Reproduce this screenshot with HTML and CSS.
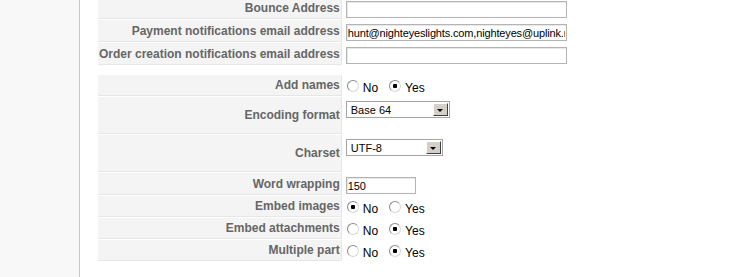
FILE: index.html
```html
<!DOCTYPE html>
<html lang="en">
<head>
    <meta charset="UTF-8">
    <title>Mail Settings</title>
    <link rel="stylesheet" href="styles.css">
</head>
<body>
    <div class="page">
        <div class="sidebar"></div>
        <div class="content">
            <table class="admintable">
                <tr>
                    <td class="key">Bounce Address</td>
                    <td class="value"><input type="text" class="text-field"></td>
                </tr>
                <tr>
                    <td class="key">Payment notifications email address</td>
                    <td class="value"><input type="text" class="text-field" value="hunt@nighteyeslights.com,nighteyes@uplink.net"></td>
                </tr>
                <tr>
                    <td class="key">Order creation notifications email address</td>
                    <td class="value"><input type="text" class="text-field"></td>
                </tr>
                <tr class="spacer">
                    <td colspan="2"></td>
                </tr>
                <tr class="radio-row">
                    <td class="key">Add names</td>
                    <td class="value">
                        <div class="choices">
                            <label class="choice"><input type="radio" name="add_names">No</label>
                            <label class="choice"><input type="radio" name="add_names" checked>Yes</label>
                        </div>
                    </td>
                </tr>
                <tr class="tall-row">
                    <td class="key">Encoding format</td>
                    <td class="value">
                        <span class="dropdown"><select class="encoding">
                            <option>Base 64</option>
                            <option>8 bit</option>
                            <option>Quoted printable</option>
                        </select></span>
                    </td>
                </tr>
                <tr class="tall-row">
                    <td class="key">Charset</td>
                    <td class="value">
                        <span class="dropdown"><select class="charset">
                            <option>UTF-8</option>
                            <option>ISO-8859-1</option>
                        </select></span>
                    </td>
                </tr>
                <tr>
                    <td class="key">Word wrapping</td>
                    <td class="value"><input type="text" class="text-field short" value="150"></td>
                </tr>
                <tr class="radio-row">
                    <td class="key">Embed images</td>
                    <td class="value">
                        <div class="choices">
                            <label class="choice"><input type="radio" name="embed_images" checked>No</label>
                            <label class="choice"><input type="radio" name="embed_images">Yes</label>
                        </div>
                    </td>
                </tr>
                <tr class="radio-row">
                    <td class="key">Embed attachments</td>
                    <td class="value">
                        <div class="choices">
                            <label class="choice"><input type="radio" name="embed_attachments">No</label>
                            <label class="choice"><input type="radio" name="embed_attachments" checked>Yes</label>
                        </div>
                    </td>
                </tr>
                <tr class="radio-row">
                    <td class="key">Multiple part</td>
                    <td class="value">
                        <div class="choices">
                            <label class="choice"><input type="radio" name="multiple_part">No</label>
                            <label class="choice"><input type="radio" name="multiple_part" checked>Yes</label>
                        </div>
                    </td>
                </tr>
            </table>
        </div>
    </div>
</body>
</html>
```

FILE: styles.css
```css
body {
    margin: 0;
    background: #fff;
    font-family: Arial, "Liberation Sans", sans-serif;
    overflow: hidden;
}
.page {
    display: flex;
    min-height: 277px;
}
.sidebar {
    width: 79px;
    background: #f8f8f8;
    border-right: 1px solid #c8c8c8;
}
.content {
    padding-left: 17px;
}
.admintable {
    border-spacing: 1px;
    margin-top: -4px;
}
.admintable td {
    padding: 0;
}
.admintable td.key {
    height: 21px;
    padding: 0 1px;
    background: #f4f4f4;
    color: #666;
    font-size: 12px;
    font-weight: bold;
    text-align: right;
    white-space: nowrap;
    border-bottom: 1px solid #e6e6e6;
    border-right: 1px solid #e6e6e6;
}
.admintable td.value {
    vertical-align: top;
    padding: 4px 0 0 3px;
    font-size: 12px;
}
.spacer td {
    height: 8px;
}
.radio-row td.key {
    height: 20px;
}
.tall-row td.key {
    height: 36px;
}
.text-field {
    box-sizing: border-box;
    width: 221px;
    height: 17px;
    margin: 0;
    padding: 0 1px;
    border: 1px solid #b4b4b4;
    box-shadow: inset 1px 1px 0 #e8e8e8;
    font-family: Arial, "Liberation Sans", sans-serif;
    font-size: 11px;
    letter-spacing: -0.15px;
    color: #000;
}
.text-field.short {
    width: 70px;
}
.choices {
    display: flex;
    align-items: center;
    padding-top: 2px;
}
.choice {
    display: flex;
    align-items: center;
    margin-right: 10px;
    color: #000;
}
.choice input {
    appearance: none;
    width: 12px;
    height: 12px;
    margin: -4px 4px 0 1px;
    border: 1px solid;
    border-color: #8a8a8a #d8d8d8 #d8d8d8 #8a8a8a;
    border-radius: 50%;
    background: #fff;
}
.choice input:checked {
    background: radial-gradient(circle, #000 0 2px, #fff 2.5px);
}
.dropdown {
    position: relative;
    display: inline-block;
}
.dropdown select {
    appearance: none;
    box-sizing: border-box;
    height: 17px;
    margin: 0;
    padding: 0 0 0 4px;
    border: 1px solid #a5a5a5;
    border-radius: 0;
    background: #fff;
    font-family: Arial, "Liberation Sans", sans-serif;
    font-size: 11px;
    color: #000;
}
.dropdown .encoding {
    width: 104px;
}
.dropdown .charset {
    width: 97px;
}
.dropdown::after {
    content: "";
    position: absolute;
    top: 2px;
    right: 2px;
    width: 13px;
    height: 11px;
    background: #d4d0c8;
    border: 1px solid;
    border-color: #fff #404040 #404040 #fff;
    pointer-events: none;
}
.dropdown::before {
    content: "";
    position: absolute;
    top: 8px;
    right: 7px;
    border-left: 3px solid transparent;
    border-right: 3px solid transparent;
    border-top: 3px solid #000;
    z-index: 1;
    pointer-events: none;
}
```
